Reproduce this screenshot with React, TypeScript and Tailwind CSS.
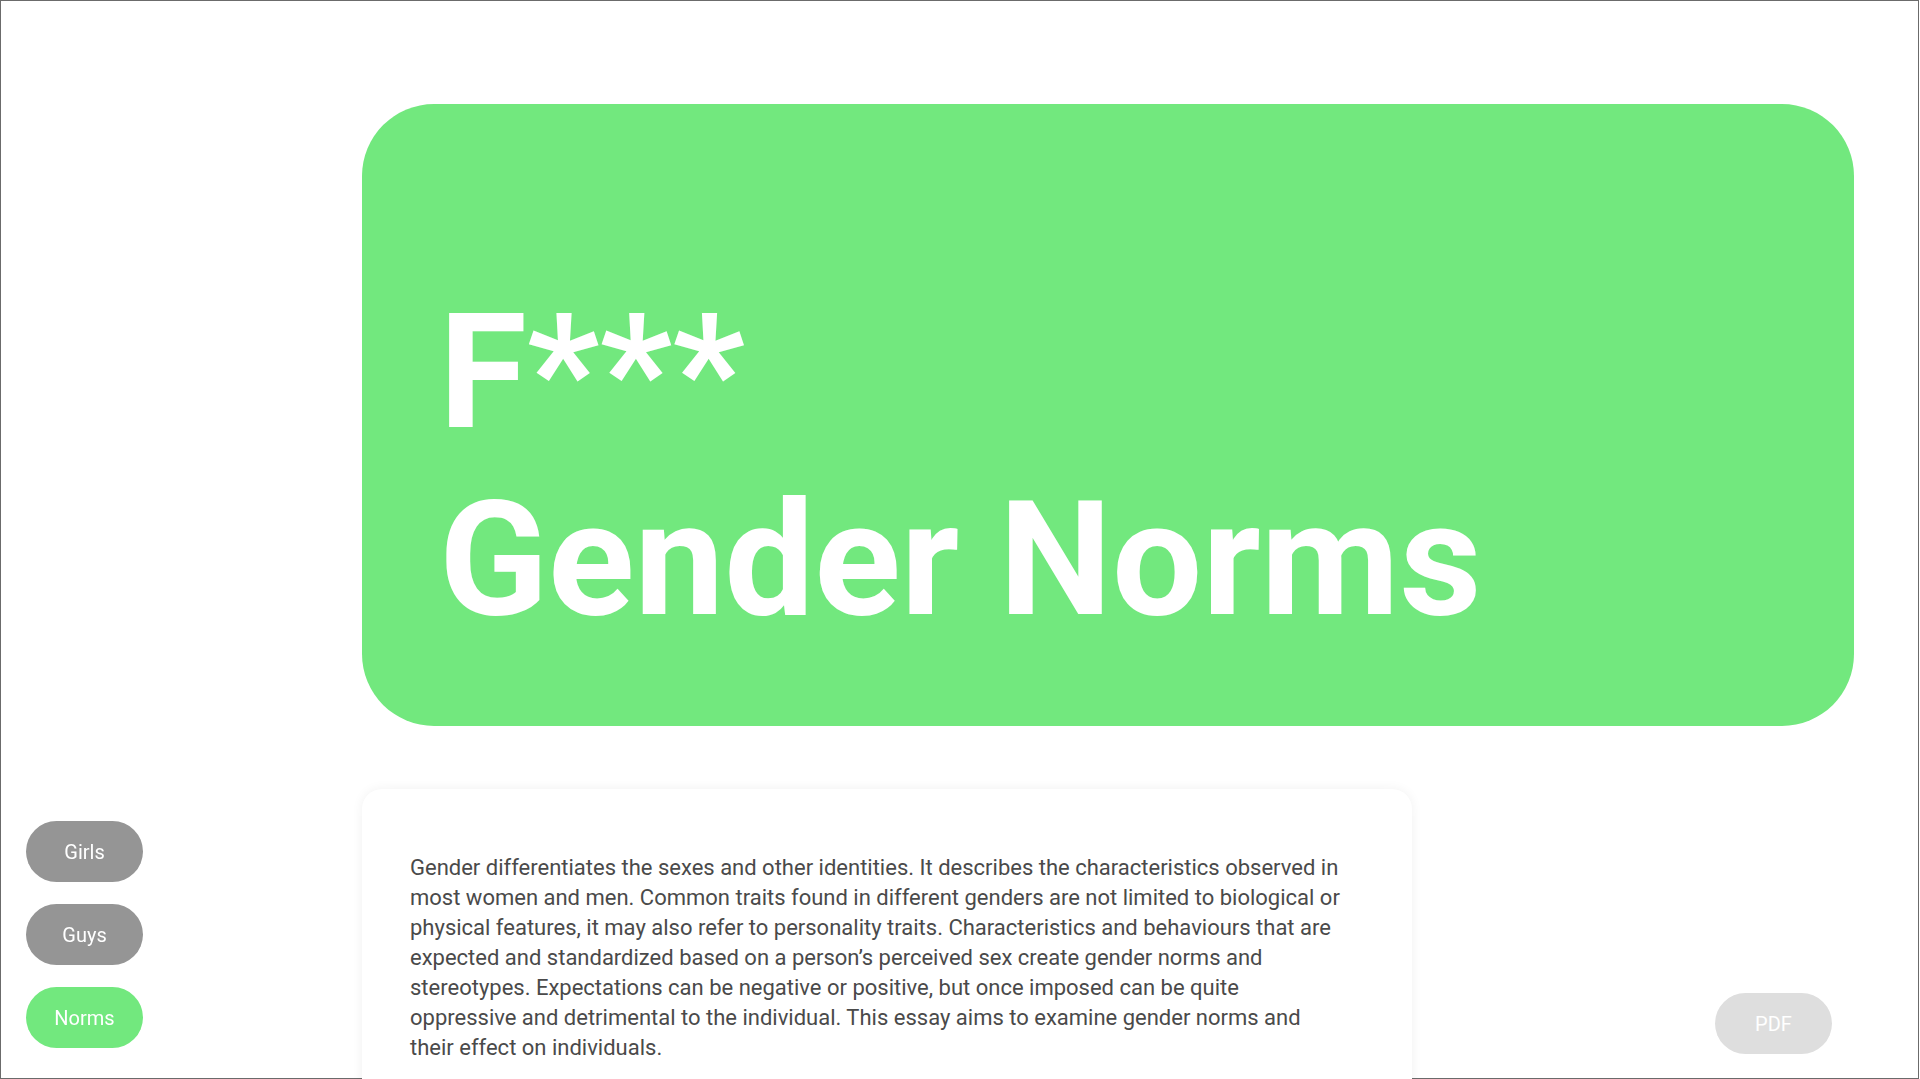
import React from "react";

const navItems = [
  { label: "Girls", active: false },
  { label: "Guys", active: false },
  { label: "Norms", active: true },
];

const intro =
  "Gender differentiates the sexes and other identities. It describes the characteristics observed in most women and men. Common traits found in different genders are not limited to biological or physical features, it may also refer to personality traits. Characteristics and behaviours that are expected and standardized based on a person\u2019s perceived sex create gender norms and stereotypes. Expectations can be negative or positive, but once imposed can be quite oppressive and detrimental to the individual. This essay aims to examine gender norms and their effect on individuals.";

export default function App() {
  return (
    <div
      className="relative h-[1079px] w-full overflow-hidden bg-white"
      style={{ fontFamily: "Roboto, 'Liberation Sans', sans-serif" }}
    >
      {/* frame line */}
      <div className="pointer-events-none absolute left-0 top-0 h-[1079px] w-[1919px] border border-[#6b6b6b]" />

      <main className="relative z-10 flex flex-col gap-[63px] pl-[362px] pr-[66px] pt-[104px]">
        {/* Hero */}
        <section className="flex h-[622px] w-[1492px] flex-col justify-end rounded-[72px] bg-[#72e87e] pb-[73px] pl-[77px]">
          <h1 className="text-[160px] font-bold leading-[187px] text-white">
            F***
          </h1>
          <h1 className="text-[160px] font-bold leading-[187px] text-white">
            Gender Norms
          </h1>
        </section>

        {/* Intro text card */}
        <section className="w-[1050px] rounded-[20px] bg-white pb-12 pl-12 pr-[68px] pt-16 shadow-[0_0_12px_rgba(0,0,0,0.06)]">
          <p className="text-[22px] leading-[30px] text-[#4a4a4a]">{intro}</p>
        </section>
      </main>

      {/* Side nav */}
      <nav className="fixed bottom-[31px] left-[26px] z-20 flex flex-col gap-[22px]">
        {navItems.map((item) => (
          <button
            key={item.label}
            className={`flex h-[61px] w-[117px] items-center justify-center rounded-full text-[20px] text-white ${
              item.active ? "bg-[#72e87e]" : "bg-[#959595]"
            }`}
          >
            {item.label}
          </button>
        ))}
      </nav>

      {/* PDF button */}
      <button className="fixed bottom-[25px] right-[88px] z-20 flex h-[61px] w-[117px] items-center justify-center rounded-full bg-[#dedede] text-[20px] text-white">
        PDF
      </button>
    </div>
  );
}
